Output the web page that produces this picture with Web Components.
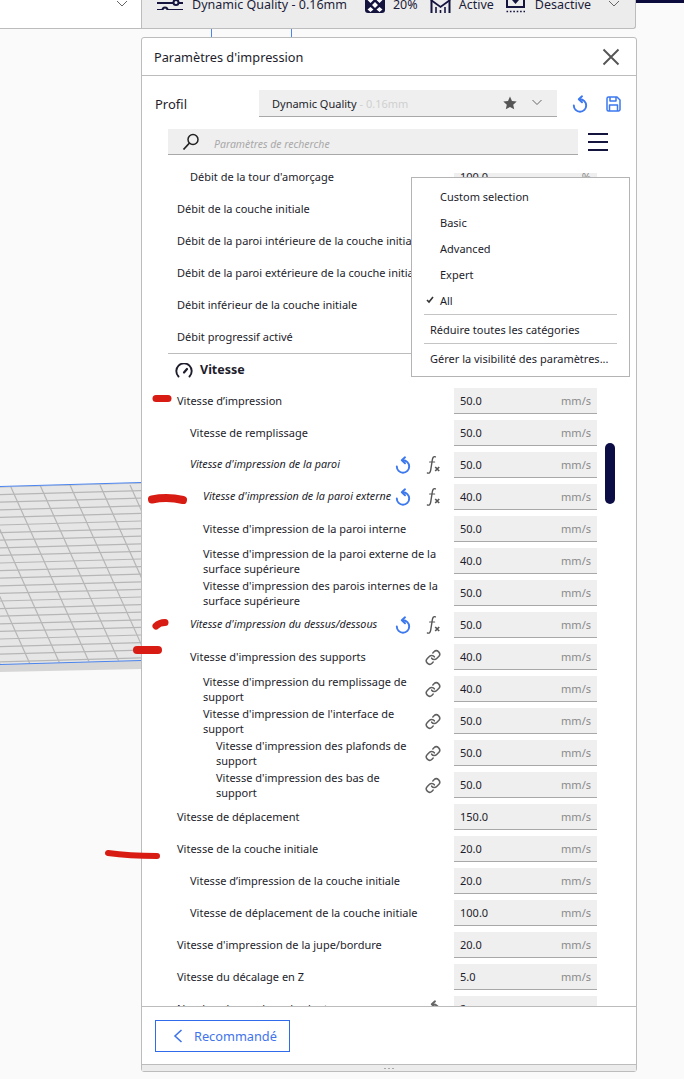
<!DOCTYPE html>
<html lang="fr">
<head>
<meta charset="utf-8">
<title>Paramètres d'impression</title>
<style>
html, body { margin: 0; padding: 0; }
body { font-family: "Noto Sans", "Open Sans", sans-serif; color: #1d1d2b; background: #fafafa; }
</style>
</head>
<body>
<cura-app>
  <cura-viewport></cura-viewport>
  <cura-topbar></cura-topbar>
  <cura-panel>
    <setting-row level="1" value="100.0" unit="%">Débit de la tour d'amorçage</setting-row>
    <setting-row level="0">Débit de la couche initiale</setting-row>
    <setting-row level="0">Débit de la paroi intérieure de la couche initiale</setting-row>
    <setting-row level="0">Débit de la paroi extérieure de la couche initiale</setting-row>
    <setting-row level="0">Débit inférieur de la couche initiale</setting-row>
    <setting-row level="0">Débit progressif activé</setting-row>
    <setting-section>Vitesse</setting-section>
    <setting-row level="0" value="50.0" unit="mm/s">Vitesse d’impression</setting-row>
    <setting-row level="1" value="50.0" unit="mm/s">Vitesse de remplissage</setting-row>
    <setting-row level="1" value="50.0" unit="mm/s" icons="reset fx" italic>Vitesse d'impression de la paroi</setting-row>
    <setting-row level="2" value="40.0" unit="mm/s" icons="reset fx" italic>Vitesse d'impression de la paroi externe</setting-row>
    <setting-row level="2" value="50.0" unit="mm/s">Vitesse d'impression de la paroi interne</setting-row>
    <setting-row level="2" value="40.0" unit="mm/s">Vitesse d'impression de la paroi externe de la surface supérieure</setting-row>
    <setting-row level="2" value="50.0" unit="mm/s">Vitesse d'impression des parois internes de la surface supérieure</setting-row>
    <setting-row level="1" value="50.0" unit="mm/s" icons="reset fx" italic>Vitesse d'impression du dessus/dessous</setting-row>
    <setting-row level="1" value="40.0" unit="mm/s" icons="link">Vitesse d'impression des supports</setting-row>
    <setting-row level="2" value="40.0" unit="mm/s" icons="link">Vitesse d'impression du remplissage de support</setting-row>
    <setting-row level="2" value="50.0" unit="mm/s" icons="link">Vitesse d'impression de l'interface de support</setting-row>
    <setting-row level="3" value="50.0" unit="mm/s" icons="link">Vitesse d'impression des plafonds de support</setting-row>
    <setting-row level="3" value="50.0" unit="mm/s" icons="link">Vitesse d'impression des bas de<br>support</setting-row>
    <setting-row level="0" value="150.0" unit="mm/s">Vitesse de déplacement</setting-row>
    <setting-row level="0" value="20.0" unit="mm/s">Vitesse de la couche initiale</setting-row>
    <setting-row level="1" value="20.0" unit="mm/s">Vitesse d’impression de la couche initiale</setting-row>
    <setting-row level="1" value="100.0" unit="mm/s">Vitesse de déplacement de la couche initiale</setting-row>
    <setting-row level="0" value="20.0" unit="mm/s">Vitesse d'impression de la jupe/bordure</setting-row>
    <setting-row level="0" value="5.0" unit="mm/s">Vitesse du décalage en Z</setting-row>
    <setting-row level="0" value="2" unit="" icons="reset-gray">Nombre de couches plus lentes</setting-row>
  </cura-panel>
  <cura-marks></cura-marks>
</cura-app>

<script>
const RESET_ICON = `<svg width="16" height="18" viewBox="0 0 16 18" fill="none" stroke="currentColor" stroke-width="1.900" stroke-linecap="round" stroke-linejoin="round"><path d="M8 4.300A6.200 6.200 0 1 1 1.800 10.500"/><path d="M10 1.300 6.800 4.300l3.200 3"/></svg>`;
const FX_ICON = `<svg width="16" height="20" viewBox="0 0 16 20" fill="none" stroke="#555" stroke-linecap="round"><path stroke-width="1.400" d="M10.400 1.800C8.400 1.200 7.700 2.600 7.300 5L5.700 15.200C5.300 17.600 4.300 18.600 2.400 18"/><path stroke-width="1.200" d="M4.600 7h5"/><path stroke-width="1.700" stroke-linecap="butt" d="M10.200 12l4 4M14.200 12l-4 4"/></svg>`;
const LINK_ICON = `<svg width="17" height="17" viewBox="0 0 24 24" fill="none" stroke="#606060" stroke-width="2.300" stroke-linecap="round" stroke-linejoin="round"><path d="M10 13a5 5 0 0 0 7.540.540l3-3a5 5 0 0 0-7.070-7.070l-1.720 1.710"/><path d="M14 11a5 5 0 0 0-7.540-.540l-3 3a5 5 0 0 0 7.070 7.070l1.710-1.710"/></svg>`;
const CHEVRON = `<svg width="12" height="8" viewBox="0 0 12 8" fill="none" stroke="#666" stroke-width="1"><path d="M1 1l5 5 5-5"/></svg>`;

customElements.define("cura-app", class extends HTMLElement {
  constructor() {
    super();
    this.attachShadow({ mode: "open" }).innerHTML = `
<style>
:host { display: block; position: relative; width: 684px; height: 1079px; overflow: hidden; background: #fafafa; }
</style>
<slot></slot>`;
  }
});

// build plate behind the panel
customElements.define("cura-viewport", class extends HTMLElement {
  constructor() {
    super();
    let lines = "";
    for (let i = 0; i < 25; i++) {
      const y = 487 + i * 7.600;
      lines += `<path d="M0 ${y}L141 ${y - 4}"/>`;
    }
    for (let i = -6; i < 6; i++) {
      const x = 10 + i * 30;
      lines += `<path d="M${x} 485L${x + 80} 664"/>`;
    }
    this.attachShadow({ mode: "open" }).innerHTML = `
<style>
:host { display: block; position: absolute; inset: 0; }
svg { display: block; }
</style>
<svg width="684" height="1079" viewBox="0 0 684 1079">
  <defs><clipPath id="plate"><path d="M0 487L141 483V660L0 664Z"/></clipPath></defs>
  <path d="M0 664L141 660V669L0 672Z" fill="#d6d6d6"/>
  <path d="M0 487L141 483V660L0 664Z" fill="#e6e6e6"/>
  <g clip-path="url(#plate)" fill="none" stroke="#b6b6b6" stroke-width="1.200">${lines}</g>
  <path d="M0 486.500L141 482.500M0 664.500L141 660.500" fill="none" stroke="#4a84ee" stroke-width="1"/>
  <path d="M211.500 28V37M291.500 28V37" stroke="#4a84ee" stroke-width="1"/>
</svg>`;
  }
});

customElements.define("cura-topbar", class extends HTMLElement {
  constructor() {
    super();
    this.attachShadow({ mode: "open" }).innerHTML = `
<style>
:host { display: flex; position: relative; height: 29px; font-size: 12.500px; }
.left { width: 141px; box-sizing: border-box; background: #fff; border-bottom: 1px solid #bcbcbc; overflow: hidden; }
.left svg { display: block; margin: 0 0 0 116px; }
.bar { width: 495px; box-sizing: border-box; background: #ececec; border: 1px solid #bcbcbc; border-top: 0; border-bottom-right-radius: 3px; display: flex; align-items: flex-start; overflow: hidden; color: #1d1d3a; }
.item { display: flex; align-items: center; height: 16px; margin-top: -4px; flex: none; white-space: nowrap; }
.item svg { flex: none; }
.chev { margin-top: 0; height: 8px; }
.right { flex: 1; }
.right div { height: 3px; background: #0b0b3e; }
</style>
<div class="left">${CHEVRON}</div>
<div class="bar">
  <div class="item" style="margin-left:15px">
    <svg width="26" height="14" viewBox="0 0 26 14" style="margin-top:-2px;margin-right:9px" fill="none" stroke="#14143f" stroke-width="2"><path d="M0 7H16M22 7H26M0 14H5M11 14H26"/><circle cx="19" cy="6.500" r="2.500"/><circle cx="8" cy="14" r="2.500"/></svg>
    <span>Dynamic Quality - 0.16mm</span>
  </div>
  <div class="item" style="margin-left:18px">
    <svg width="20" height="17" viewBox="0 0 20 17" style="margin-top:1px;margin-right:8px"><rect width="20" height="17" rx="3" fill="#14143f"/><g fill="#fff"><path d="M5.500 1l3 3-3 3-3-3zM14.500 1l3 3-3 3-3-3zM10 6l3 3-3 3-3-3zM5.500 11l3 2.500-3 2.500-3-2.500zM14.500 11l3 2.500-3 2.500-3-2.500z"/></g></svg>
    <span>20%</span>
  </div>
  <div class="item" style="margin-left:12px">
    <svg width="21" height="17" viewBox="0 0 21 17" style="margin-top:1px;margin-right:8px" fill="none" stroke="#14143f"><path stroke-width="1.800" d="M1 4L10.500 11 20 4"/><path stroke-width="2" d="M1.500 3V17M19.500 3V17"/><path stroke-width="1.600" d="M6 11V17M10.500 14V17M15 11V17"/></svg>
    <span>Active</span>
  </div>
  <div class="item" style="margin-left:11px">
    <svg width="21" height="17" viewBox="0 0 21 17" style="margin-top:1px;margin-right:9px" fill="none" stroke="#14143f" stroke-width="2"><path d="M2 3V11H19V3"/><path fill="#14143f" stroke="none" d="M7 4H14L10.500 8Z"/><path stroke-width="1.600" stroke-dasharray="1.600 1.800" d="M1.500 15.500H20"/></svg>
    <span>Desactive</span>
  </div>
  <div class="item chev" style="margin-left:17px">${CHEVRON}</div>
</div>
<div class="right"><div></div></div>`;
  }
});

customElements.define("cura-panel", class extends HTMLElement {
  constructor() {
    super();
    this.attachShadow({ mode: "open" }).innerHTML = `
<style>
:host { display: flex; flex-direction: column; position: relative; box-sizing: border-box; width: 496px; height: 1035px; margin: 8px 0 0 141px; background: #fff; border: 1px solid #bcbcbc; border-radius: 3px; font-size: 11px; }
header { display: flex; align-items: center; justify-content: space-between; height: 38px; box-sizing: border-box; border-bottom: 1px solid #bcbcbc; padding: 1px 16px 0 12px; font-size: 12.750px; flex: none; }
header svg { display: block; }
.profile { display: flex; align-items: center; height: 27px; margin-top: 14px; padding-left: 13px; flex: none; }
.profile .name { width: 104px; font-size: 13px; }
.select { width: 298px; height: 27px; box-sizing: border-box; background: #efefef; border-bottom: 1px solid #a8a8a8; display: flex; align-items: center; padding-left: 13px; }
.select .dim { color: #cfcfcf; }
.select .grow { flex: 1; }
.select .star { margin-right: 14px; }
.select .chev { margin-right: 14px; display: block; }
.profile .act { display: flex; margin-left: 15px; gap: 18px; align-items: center; color: #3c78ee; }
.search { display: flex; align-items: center; height: 26px; margin: 12px 0 0 26px; flex: none; }
.box { width: 410px; height: 26px; box-sizing: border-box; background: #efefef; border-bottom: 1px solid #a8a8a8; display: flex; align-items: center; padding-left: 14px; color: #a9a9a9; font-style: italic; font-size: 10.500px; }
.box span { padding-top: 5px; }
.box svg { margin-right: 14px; }
.burger { margin-left: 10px; display: block; }
.list { flex: 1; min-height: 0; overflow: hidden; margin-top: 18px; padding-left: 26px; }
.scroll { margin-top: -12px; }
.thumb { position: absolute; left: 463px; top: 405px; width: 10px; height: 61px; border-radius: 5px; background: #0d0d45; }
footer { flex: none; height: 58px; box-sizing: border-box; border-top: 1px solid #bcbcbc; padding: 13px 0 0 13px; background: #fff; }
footer button { display: flex; align-items: center; width: 135px; height: 32px; box-sizing: border-box; padding: 0 0 0 17px; background: #fff; border: 1px solid #2f6bea; color: #3f74ec; font: inherit; font-size: 12.750px; }
footer svg { margin-right: 11px; }
.grip { flex: none; height: 7px; box-sizing: border-box; background: #ececec; border-top: 1px solid #bcbcbc; display: flex; align-items: center; justify-content: center; gap: 2px; }
.grip i { width: 2px; height: 1px; background: #aaa; }
</style>
<header>
  <span>Paramètres d'impression</span>
  <svg width="18" height="18" viewBox="0 0 18 18" stroke="#555" stroke-width="1.900"><path d="M1.500 1.500l15 15M16.500 1.500l-15 15"/></svg>
</header>
<div class="profile">
  <span class="name">Profil</span>
  <div class="select">
    <span>Dynamic Quality <span class="dim">- 0.16mm</span></span>
    <span class="grow"></span>
    <svg class="star" width="14" height="14" viewBox="0 0 24 24" fill="#555"><path d="M12 1l3.400 7.400 8.100.9-6 5.500 1.700 8L12 18.700 4.800 22.800l1.700-8-6-5.500 8.100-.9z"/></svg>
    <svg class="chev" width="12" height="8" viewBox="0 0 12 8" fill="none" stroke="#666" stroke-width="1"><path d="M1.500 1l4.500 4.500L10.500 1"/></svg>
  </div>
  <div class="act">
    <span style="display:flex">${RESET_ICON}</span>
    <svg width="15" height="16" viewBox="0 0 15 16" fill="none" stroke="currentColor" stroke-width="1.500" stroke-linejoin="round"><path d="M1 2.500A1.500 1.500 0 0 1 2.500 1H11l3 3V13.500A1.500 1.500 0 0 1 12.500 15H2.500A1.500 1.500 0 0 1 1 13.500Z"/><path d="M4 1V5H10V1M3.500 15V9H11.500V15"/></svg>
  </div>
</div>
<div class="search">
  <div class="box">
    <svg width="18" height="18" viewBox="0 0 18 18" fill="none" stroke="#222" stroke-width="1.500"><circle cx="11" cy="6.500" r="5"/><path stroke-width="1.800" d="M7.500 10L1.500 16.500"/></svg>
    <span>Paramètres de recherche</span>
  </div>
  <svg class="burger" width="20" height="18" viewBox="0 0 20 18" stroke="#14143f" stroke-width="2"><path d="M0 1H20M0 9H20M0 17H20"/></svg>
</div>
<div class="list"><div class="scroll"><slot></slot></div></div>
<div class="thumb"></div>
<footer>
  <button><svg width="10" height="14" viewBox="0 0 10 14" fill="none" stroke="#3f74ec" stroke-width="1.600"><path d="M8.500 1L2 7l6.500 6"/></svg>Recommandé</button>
</footer>
<div class="grip"><i></i><i></i><i></i></div>
<settings-menu></settings-menu>`;
  }
});

customElements.define("settings-menu", class extends HTMLElement {
  constructor() {
    super();
    const levels = ["Custom selection", "Basic", "Advanced", "Expert", "All"];
    this.attachShadow({ mode: "open" }).innerHTML = `
<style>
:host { display: block; position: absolute; left: 269px; top: 139px; width: 219px; height: 200px; box-sizing: border-box; background: #fff; border: 1px solid #b4b4b4; padding-top: 6px; font-size: 11px; }
.item { height: 26px; display: flex; align-items: center; padding-left: 28px; position: relative; }
.item span { position: relative; top: -0.500px; }
.check { position: absolute; left: 14px; top: 8px; }
hr { margin: 0 12px; border: 0; border-top: 1px solid #c4c4c4; height: 0; }
.act { height: 28px; display: flex; align-items: center; padding-left: 18px; white-space: nowrap; }
</style>
${levels.map((l) => `<div class="item">${l === "All" ? `<svg class="check" width="8" height="8" viewBox="0 0 8 8" fill="none" stroke="#333" stroke-width="1.600"><path d="M1 4l2 2 4-5"/></svg>` : ""}<span>${l}</span></div>`).join("")}
<hr>
<div class="act"><span>Réduire toutes les catégories</span></div>
<hr>
<div class="act"><span>Gérer la visibilité des paramètres...</span></div>`;
  }
});

customElements.define("setting-section", class extends HTMLElement {
  constructor() {
    super();
    this.attachShadow({ mode: "open" }).innerHTML = `
<style>
:host { display: flex; align-items: center; height: 32px; box-sizing: border-box; width: 429px; border-top: 1px solid #bcbcbc; padding-left: 7px; font-weight: 700; font-size: 12.500px; }
svg { margin-right: 7px; margin-top: 1px; }
</style>
<svg width="18" height="15" viewBox="0 0 18 15" fill="none" stroke="#1d1d2b" stroke-width="1.900" stroke-linecap="round"><path d="M3.500 13.500A7.700 7.700 0 1 1 14.500 13.500"/><path stroke-width="2.200" d="M9 9.500L12 6"/></svg>
<slot></slot>`;
  }
});

customElements.define("setting-row", class extends HTMLElement {
  constructor() {
    super();
    const level = Number(this.getAttribute("level") || 0);
    const icons = (this.getAttribute("icons") || "").split(" ").filter(Boolean);
    const italic = this.hasAttribute("italic");
    const iconHtml = icons.map((name) => {
      if (name === "reset") return `<span class="ic" style="color:#3c78ee;margin-right:14px">${RESET_ICON}</span>`;
      if (name === "reset-gray") return `<span class="ic" style="color:#666">${RESET_ICON}</span>`;
      if (name === "fx") return `<span class="ic">${FX_ICON}</span>`;
      return `<span class="ic">${LINK_ICON}</span>`;
    }).join("");
    this.attachShadow({ mode: "open" }).innerHTML = `
<style>
:host { display: flex; align-items: center; height: 32px; width: 429px; box-sizing: border-box; padding-left: ${9 + level * 13}px; font-size: 11px; line-height: 15px; }
.label { flex: 1; min-width: 0; position: relative; top: -0.500px; ${italic ? "font-style: italic; font-size: 10.750px; white-space: nowrap;" : ""} }
.icons { display: flex; align-items: center; flex: none; }
.ic { display: flex; justify-content: center; width: 16px; }
.field { flex: none; width: 143px; height: 26px; box-sizing: border-box; margin-left: 13px; background: #efefef; border-bottom: 1px solid #a8a8a8; display: flex; align-items: center; justify-content: space-between; padding: 0 6px; }
.unit { color: #8a8a8a; }
</style>
<div class="label"><slot></slot></div>
<div class="icons">${iconHtml}</div>
<div class="field"><span>${this.getAttribute("value") || ""}</span><span class="unit">${this.getAttribute("unit") || ""}</span></div>`;
  }
});

// hand drawn red strokes over the capture
customElements.define("cura-marks", class extends HTMLElement {
  constructor() {
    super();
    this.attachShadow({ mode: "open" }).innerHTML = `
<style>
:host { display: block; position: absolute; inset: 0; pointer-events: none; }
</style>
<svg width="684" height="1079" viewBox="0 0 684 1079" fill="none" stroke="#d81c13" stroke-linecap="round">
  <path stroke-width="7" d="M156 398.500H168"/>
  <path stroke-width="8" d="M152 499.500C162 497.500 172 497.500 183 500"/>
  <path stroke-width="7" d="M156 626C159 623 162 622.500 165 622.500"/>
  <path stroke-width="8" d="M137 650H158"/>
  <path stroke-width="6" d="M108 853C122 855 140 856 157 856"/>
</svg>`;
  }
});
</script>
</body>
</html>
